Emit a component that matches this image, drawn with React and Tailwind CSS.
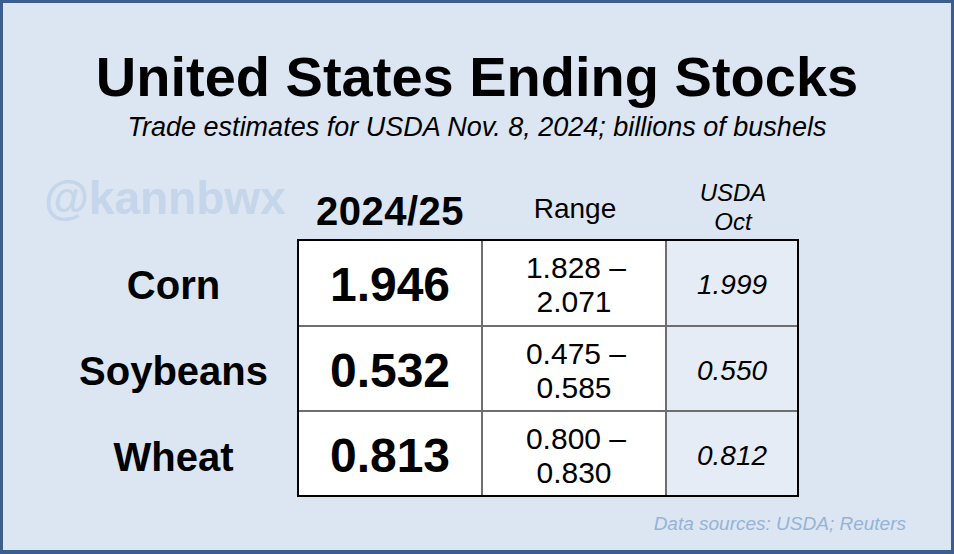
import React from 'react';

const rows = [
    { name: 'Corn', est: '1.946', lo: '1.828', hi: '2.071', usda: '1.999' },
    { name: 'Soybeans', est: '0.532', lo: '0.475', hi: '0.585', usda: '0.550' },
    { name: 'Wheat', est: '0.813', lo: '0.800', hi: '0.830', usda: '0.812' },
];

const App = () => {
    return (
        <div className="w-[954px] h-[554px] bg-[#dce6f2] border-[3px] border-b-4 border-[#3b5e8c] flex flex-col text-black font-['Liberation_Sans',Arial,sans-serif]">
            {/* Title */}
            <div className="pt-[46px] text-center">
                <h1 className="text-[56px] leading-none font-bold">United States Ending Stocks</h1>
                <p className="mt-[9px] text-[27px] leading-none italic">Trade estimates for USDA Nov. 8, 2024; billions of bushels</p>
            </div>

            <div className="flex ml-[47px] -mt-[2px]">
                {/* Labels column */}
                <div className="w-[247px] flex flex-col">
                    <div className="h-[100px] flex items-end pb-[18px]">
                        <span className="ml-[-6px] text-[46px] leading-none font-bold text-[#c5d5ea]">@kannbwx</span>
                    </div>
                    <div className="pt-[2px]">
                        {rows.map((r, i) => (
                            <div key={r.name} className={`h-[84px] pt-[4px] flex items-center justify-center ${i > 0 ? 'mt-[2px]' : ''}`}>
                                <span className="text-[40px] leading-none font-bold">{r.name}</span>
                            </div>
                        ))}
                    </div>
                </div>

                {/* Data columns */}
                <div className="w-[502px] flex flex-col">
                    <div className="h-[100px] grid grid-cols-[186px_184px_132px] items-end">
                        <div className="pb-[8px] text-center text-[40px] leading-none font-bold tracking-[0.5px]">2024/25</div>
                        <div className="pb-[16px] text-center text-[28px] leading-none">Range</div>
                        <div className="pb-[3px] text-center text-[24px] leading-[29px] italic">USDA<br />Oct</div>
                    </div>
                    <div className="border-2 border-black">
                        {rows.map((r, i) => (
                            <div key={r.name} className={`grid grid-cols-[184px_184px_130px] ${i > 0 ? 'h-[85px] border-t-2 border-[#6e6e6e]' : 'h-[84px]'}`}>
                                <div className="bg-white pt-[4px] flex items-center justify-center border-r-2 border-[#6e6e6e]">
                                    <span className="text-[48px] leading-none font-bold">{r.est}</span>
                                </div>
                                <div className="bg-white pt-[4px] flex flex-col items-center justify-center border-r-2 border-[#6e6e6e] text-[30px] leading-[34px]">
                                    <span className="pl-[4px]">{r.lo} –</span>
                                    <span>{r.hi}</span>
                                </div>
                                <div className="bg-[#e6ecf6] pt-[4px] flex items-center justify-center">
                                    <span className="text-[28px] leading-none italic">{r.usda}</span>
                                </div>
                            </div>
                        ))}
                    </div>
                </div>
            </div>

            <div className="mt-auto mb-[17px] mr-[45px] text-right text-[19px] leading-none italic text-[#95b3d7]">
                Data sources: USDA; Reuters
            </div>
        </div>
    );
};

export default App;
